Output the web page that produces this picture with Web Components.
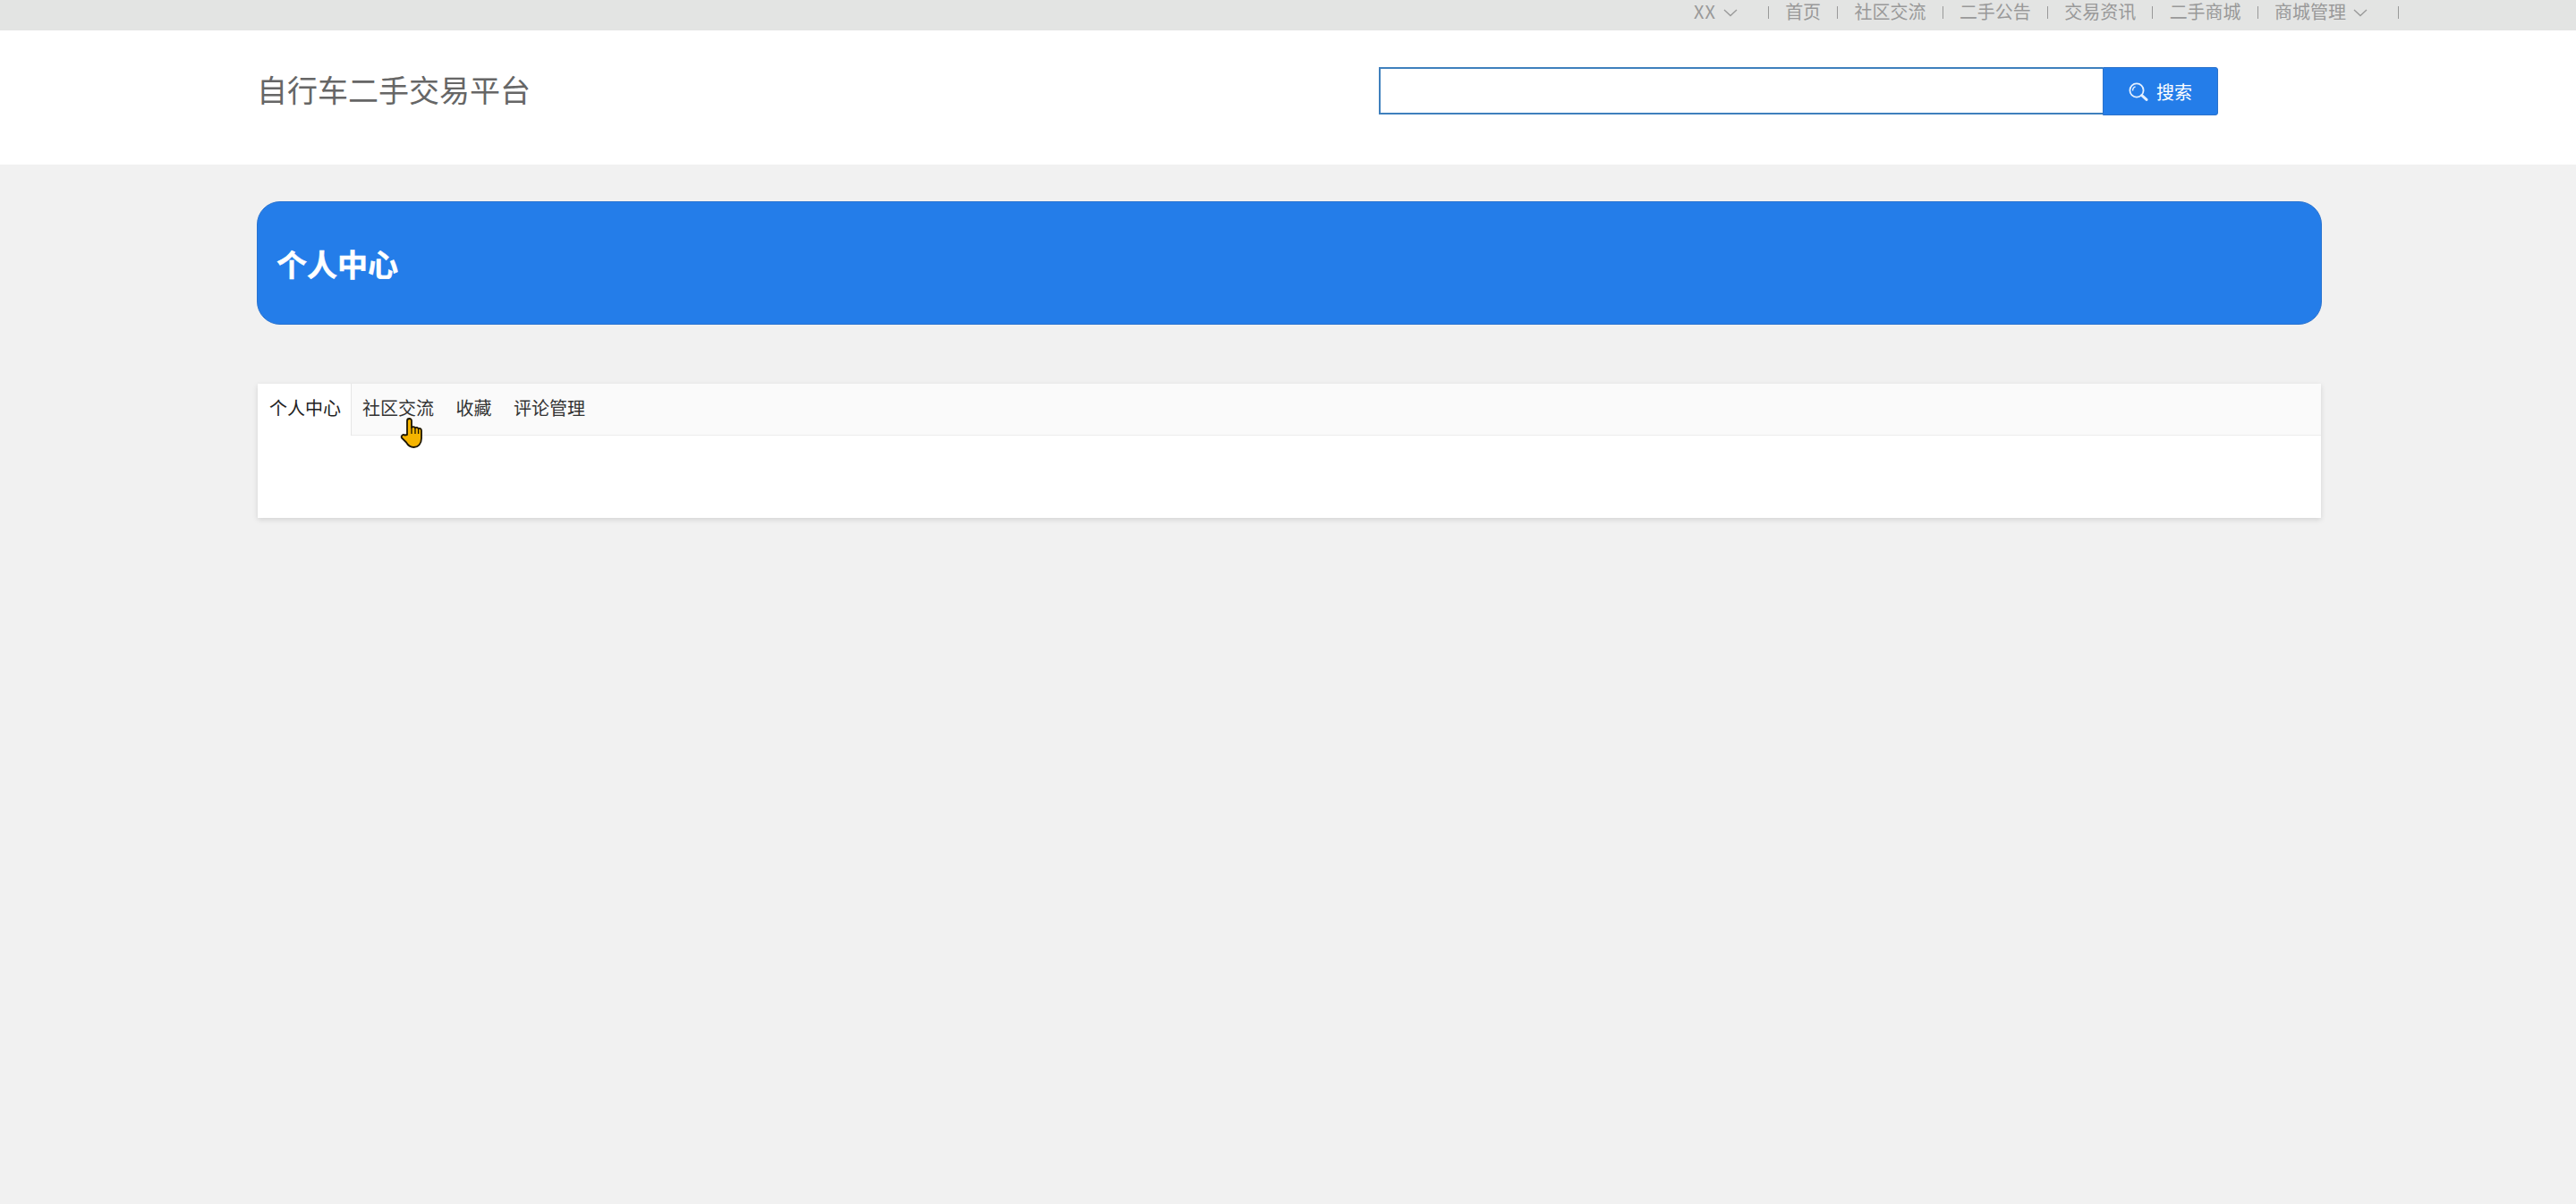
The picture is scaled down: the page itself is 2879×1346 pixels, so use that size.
<!DOCTYPE html>
<html lang="zh">
<head>
<meta charset="utf-8">
<title>自行车二手交易平台</title>
<style>
  html, body { margin: 0; height: 100%; }
  body {
    background: #f1f1f1;
    font-family: "Noto Sans CJK SC", "Liberation Sans", sans-serif;
    min-height: 1346px;
    overflow: hidden;
  }
</style>
</head>
<body>
<top-bar>
  <top-link drop style="letter-spacing:1px">XX</top-link>
  <top-link>首页</top-link>
  <top-link>社区交流</top-link>
  <top-link>二手公告</top-link>
  <top-link>交易资讯</top-link>
  <top-link>二手商城</top-link>
  <top-link drop>商城管理</top-link>
</top-bar>
<site-header>
  <span slot="title">自行车二手交易平台</span>
  <search-box slot="search">搜索</search-box>
</site-header>
<page-banner>个人中心</page-banner>
<tab-card>
  <tab-item active>个人中心</tab-item>
  <tab-item>社区交流</tab-item>
  <tab-item>收藏</tab-item>
  <tab-item>评论管理</tab-item>
</tab-card>
<script>
const chevron = `<svg width="16" height="9" viewBox="0 0 16 9" fill="none" stroke="#999" stroke-width="1.3"><path d="M1 1l7 6.5L15 1"/></svg>`

customElements.define('top-bar', class extends HTMLElement {
  constructor() {
    super()
    this.attachShadow({ mode: 'open' }).innerHTML = `
    <style>
    :host {
      display: flex;
      justify-content: flex-end;
      align-items: center;
      box-sizing: border-box;
      height: 34px;
      padding: 0 198px 6px 0;
      background: #e3e4e3;
    }
    </style>
    <slot></slot>
    `
  }
})

customElements.define('top-link', class extends HTMLElement {
  constructor() {
    super()
    this.attachShadow({ mode: 'open' }).innerHTML = `
    <style>
    :host {
      display: flex;
      align-items: center;
      height: 14px;
      padding: 0 18.2px;
      border-right: 1px solid #999;
      color: #999;
      font-size: 20px;
      line-height: 14px;
      white-space: nowrap;
    }
    :host([drop]) { padding-right: 34px; }
    .chev { display: none; margin: 0 0 5px 8px; }
    :host([drop]) .chev { display: block; }
    span { position: relative; top: -1px; }
    </style>
    <span><slot></slot></span>
    <div class="chev">${chevron}</div>
    `
  }
})

customElements.define('site-header', class extends HTMLElement {
  constructor() {
    super()
    this.attachShadow({ mode: 'open' }).innerHTML = `
    <style>
    :host {
      display: flex;
      align-items: center;
      justify-content: space-between;
      box-sizing: border-box;
      height: 150px;
      padding: 0 400px 14px 287px;
      background: #fff;
    }
    .title {
      color: #666;
      font-size: 34px;
      line-height: 44px;
      position: relative;
      top: -2px;
    }
    </style>
    <div class="title"><slot name="title"></slot></div>
    <slot name="search"></slot>
    `
  }
})

customElements.define('search-box', class extends HTMLElement {
  constructor() {
    super()
    this.attachShadow({ mode: 'open' }).innerHTML = `
    <style>
    :host {
      display: flex;
      height: 54px;
    }
    input {
      box-sizing: border-box;
      width: 809px;
      height: 53px;
      padding: 0 10px;
      border: 2px solid #3f80bd;
      border-right: 0;
      outline: 0;
      background: #fff;
    }
    button {
      display: flex;
      align-items: center;
      justify-content: center;
      gap: 9px;
      box-sizing: border-box;
      width: 129px;
      height: 54px;
      padding: 0;
      border: 1px solid #2b72cb;
      border-radius: 0 3px 3px 0;
      background: #247de9;
      color: #fff;
      font: 20px "Noto Sans CJK SC", "Liberation Sans", sans-serif;
    }
    </style>
    <input type="text" aria-label="搜索">
    <button>
      <svg width="22" height="21" viewBox="0 0 22 21" fill="none" stroke="#e4f0ff">
        <circle cx="9" cy="9" r="7.6" stroke-width="1.8"/>
        <path d="M4.6 9.5a4.6 4.6 0 0 1 3-4.6" stroke-width="1.4"/>
        <path d="M14.8 14.6l5.2 4.8" stroke-width="3" stroke-linecap="round"/>
      </svg>
      <span><slot></slot></span>
    </button>
    `
  }
})

customElements.define('page-banner', class extends HTMLElement {
  constructor() {
    super()
    this.attachShadow({ mode: 'open' }).innerHTML = `
    <style>
    :host {
      display: flex;
      align-items: center;
      box-sizing: border-box;
      height: 138px;
      margin: 41px 284px 0 287px;
      padding: 0 21px;
      border: 1px solid #2b74d0;
      border-radius: 26px;
      background: #247de9;
      color: #fff;
      font-size: 34px;
      font-weight: 700;
      -webkit-text-stroke: .5px #fff;
    }
    </style>
    <slot></slot>
    `
  }
})

customElements.define('tab-card', class extends HTMLElement {
  constructor() {
    super()
    this.attachShadow({ mode: 'open' }).innerHTML = `
    <style>
    :host {
      display: block;
      box-sizing: border-box;
      position: relative;
      height: 150px;
      margin: 66px 285px 0 288px;
      background: #fff;
      box-shadow: 0 2px 6px rgba(0, 0, 0, .13);
    }
    .tabs {
      display: flex;
      box-sizing: border-box;
      height: 58px;
      background: #fafafa;
      border-bottom: 1px solid #ececec;
    }
    .hand {
      position: absolute;
      left: 159px;
      top: 38px;
    }
    </style>
    <div class="tabs"><slot></slot></div>
    <svg class="hand" width="28" height="34" viewBox="0 0 28 34">
      <path d="M8 19V3.500a2.500 2.500 0 0 1 5 0V11c1-1.300 3.300-1.200 4 .4 1-1 3.100-.7 3.600.8 1.200-.8 3.400-.2 3.400 2V23c0 6-3.500 10-8.500 10-4 0-6.500-2-8.500-5.500L2 22.500c-1.200-2 1.500-4.500 3.500-3z" fill="#f5b400" stroke="#1c1500" stroke-width="1.800" stroke-linejoin="round"/>
      <path d="M13 11v7M17 11.400V18M20.600 12.200V18" fill="none" stroke="#1c1500" stroke-width="1.300"/>
    </svg>
    `
  }
})

customElements.define('tab-item', class extends HTMLElement {
  constructor() {
    super()
    this.attachShadow({ mode: 'open' }).innerHTML = `
    <style>
    :host {
      display: block;
      box-sizing: border-box;
      height: 58px;
      padding: 0 12.5px 0 12px;
      color: #333;
      font-size: 20px;
      line-height: 54px;
      white-space: nowrap;
    }
    :host([active]) {
      height: 58px;
      background: #fff;
      border-right: 1px solid #e6e6e6;
      color: #222;
      padding: 0 11px 0 13px;
    }
    </style>
    <slot></slot>
    `
  }
})
</script>
</body>
</html>
